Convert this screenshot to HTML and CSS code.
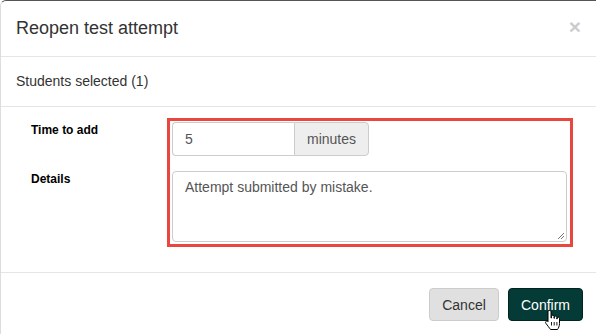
FILE: index.html
```html
<!DOCTYPE html>
<html>
<head>
<meta charset="utf-8">
<link rel="stylesheet" href="styles.css">
</head>
<body>
<div class="modal">
  <div class="modal-header">
    <h4 class="modal-title">Reopen test attempt</h4>
    <span class="close">&times;</span>
  </div>
  <div class="selected">Students selected (1)</div>
  <div class="modal-body">
    <div class="labels">
      <div class="label label-time">Time to add</div>
      <div class="label label-details">Details</div>
    </div>
    <div class="highlight">
      <div class="input-group">
        <div class="input">5</div>
        <div class="addon">minutes</div>
      </div>
      <div class="textarea">Attempt submitted by mistake.
        <svg class="grip" width="8" height="8" viewBox="0 0 8 8"><path d="M7 1 L1 7 M7 4 L4 7" stroke="#777" stroke-width="1"/></svg>
      </div>
    </div>
  </div>
  <div class="modal-footer">
    <button class="btn btn-cancel">Cancel</button>
    <button class="btn btn-confirm">Confirm</button>
    <svg class="cursor" width="18" height="22" viewBox="0 0 18 22">
      <path d="M5.5 1.5 C6.5 1.5 7 2 7 3 L7 9 L7.5 9 L7.5 7.5 C7.5 6.6 8.1 6.2 8.8 6.2 C9.6 6.2 10 6.7 10 7.5 L10 9.3 L10.4 9.3 L10.4 8.3 C10.4 7.5 11 7.1 11.6 7.1 C12.3 7.1 12.8 7.6 12.8 8.4 L12.8 10 L13.2 10 L13.2 9.3 C13.2 8.6 13.7 8.2 14.3 8.2 C15 8.2 15.5 8.7 15.5 9.4 L15.5 14.5 C15.5 17 14.5 19 13.5 20.5 L6.5 20.5 C5.5 19 3.5 16.5 2 14.5 C1.3 13.6 1.5 12.6 2.3 12.2 C3 11.9 3.6 12.2 4 12.8 L4 3 C4 2 4.6 1.5 5.5 1.5 Z" fill="#fff" stroke="#000" stroke-width="1" stroke-linejoin="round"/>
      <path d="M7.5 13 L7.5 16.5 M10.2 13 L10.2 16.5 M12.9 13 L12.9 16.5" stroke="#000" stroke-width="0.9"/>
    </svg>
  </div>
</div>
</body>
</html>
```
FILE: styles.css
```css
html, body {
  margin: 0;
  padding: 0;
  background: #fff;
}
body {
  font-family: "Liberation Sans", Arial, sans-serif;
  color: #333;
  width: 596px;
  height: 334px;
  overflow: hidden;
}
.modal {
  position: relative;
  width: 620px;
  height: 334px;
  border-top: 1px solid #555;
  border-left: 1px solid #ddd;
  border-top-left-radius: 6px;
  box-sizing: border-box;
  overflow: hidden;
}
.modal-header {
  display: flex;
  align-items: center;
  height: 55px;
  padding: 0 15px;
  border-bottom: 1px solid #e5e5e5;
  width: 596px;
  box-sizing: border-box;
  height: 56px;
}
.modal-title {
  margin: 0;
  font-size: 18px;
  font-weight: normal;
  color: #333;
  flex: 1;
  position: relative;
  top: 0;
}
.close {
  font-size: 21px;
  font-weight: bold;
  color: #000;
  opacity: 0.2;
  line-height: 1;
  margin-right: 1px;
  position: relative;
  top: -2px;
}
.selected {
  height: 50px;
  line-height: 49px;
  padding-left: 15px;
  font-size: 14px;
  border-bottom: 1px solid #e5e5e5;
  width: 596px;
  box-sizing: border-box;
}
.modal-body {
  display: flex;
  height: 166px;
  width: 596px;
  border-bottom: 1px solid #e5e5e5;
  box-sizing: border-box;
  padding-top: 11px;
}
.labels {
  width: 135px;
  padding-left: 30px;
  font-size: 12px;
  font-weight: bold;
  color: #000;
}
.label-time {
  margin-top: 5px;
}
.label-details {
  margin-top: 35px;
}
.highlight {
  margin-left: 1px;
  width: 406px;
  height: 129px;
  border: 3px solid #e8463f;
  box-sizing: border-box;
  padding: 1px 3px 2px 2px;
  display: flex;
  flex-direction: column;
  gap: 15px;
}
.input-group {
  display: flex;
  height: 34px;
}
.input {
  width: 122px;
  box-sizing: border-box;
  border: 1px solid #ccc;
  border-right: none;
  border-radius: 4px 0 0 4px;
  padding: 0 12px;
  font-size: 14px;
  line-height: 32px;
  color: #555;
}
.addon {
  width: 75px;
  box-sizing: border-box;
  border: 1px solid #ccc;
  border-radius: 0 4px 4px 0;
  background: #eee;
  font-size: 14px;
  line-height: 32px;
  text-align: center;
  color: #555;
}
.textarea {
  position: relative;
  flex: 1;
  border: 1px solid #ccc;
  border-radius: 4px;
  padding: 5px 12px;
  font-size: 14px;
  color: #555;
  line-height: 20px;
}
.grip {
  position: absolute;
  right: 1px;
  bottom: 1px;
}
.modal-footer {
  position: relative;
  width: 596px;
  display: flex;
  justify-content: flex-end;
  gap: 9px;
  padding: 15px 14px 0 0;
  box-sizing: border-box;
}
.btn {
  font-family: "Liberation Sans", Arial, sans-serif;
  font-size: 14px;
  height: 33px;
  padding: 0 12px;
  border-radius: 4px;
  border: 1px solid transparent;
  cursor: pointer;
}
.btn-cancel {
  background: #e0e0e0;
  border-color: #ccc;
  color: #333;
  width: 70px;
}
.btn-confirm {
  background: #053b36;
  color: #fff;
  border-color: #02241f;
  width: 75px;
}
.cursor {
  position: absolute;
  left: 543px;
  top: 36px;
}
```
